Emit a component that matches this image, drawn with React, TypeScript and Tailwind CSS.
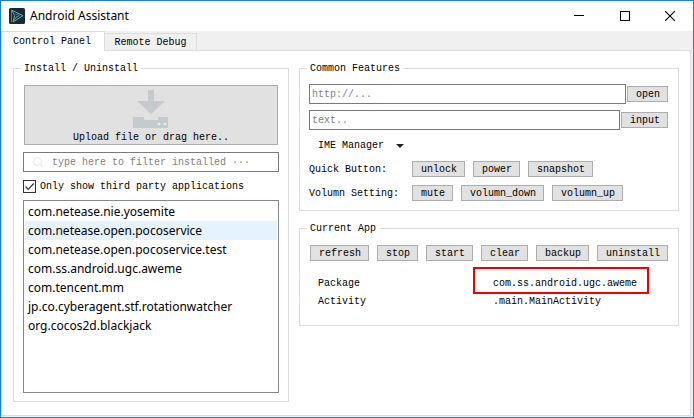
import type { ButtonHTMLAttributes, ReactNode } from "react";

const PACKAGES = [
  "com.netease.nie.yosemite",
  "com.netease.open.pocoservice",
  "com.netease.open.pocoservice.test",
  "com.ss.android.ugc.aweme",
  "com.tencent.mm",
  "jp.co.cyberagent.stf.rotationwatcher",
  "org.cocos2d.blackjack",
];

function PushButton({ children, ...rest }: ButtonHTMLAttributes<HTMLButtonElement>) {
  return (
    <button
      type="button"
      className="h-4 shrink-0 border border-[#adadad] bg-[#e1e1e1] pt-0.5 pr-[7px] pl-2 leading-3 hover:bg-[#e5f1fb]"
      {...rest}
    >
      {children}
    </button>
  );
}

function GroupBox({ title, className, children }: { title: string; className: string; children: ReactNode }) {
  return (
    <fieldset className={`min-w-0 border border-[#dcdcdc] ${className}`}>
      <legend className="h-3 px-[3px] pt-px leading-3">{title}</legend>
      {children}
    </fieldset>
  );
}

function AppLogo() {
  return (
    <svg width="16" height="16" viewBox="0 0 16 16" aria-hidden="true">
      <rect width="16" height="16" rx="1.5" fill="#1c2836" />
      <path d="M2.5 2 14 7.7 4 14 5.6 7.5Z" fill="none" stroke="#5fb5ae" strokeWidth="1" />
      <path d="M2.5 2v12M5.5 10.8l5-3.2-4.3-1.7M4 14l4-6" fill="none" stroke="#4c928f" strokeWidth="0.9" />
    </svg>
  );
}

function UploadIcon() {
  return (
    <svg width="36" height="39" viewBox="0 0 36 39" aria-hidden="true">
      <path d="M15 0h6v11h11L18 24 4 11h11Z" fill="#c5cacd" />
      <path d="M0 27h11v3h14v-3h10v11H0Z" fill="#c5cacd" />
      <circle cx="26" cy="34" r="1.6" fill="#e6e8e9" />
      <circle cx="32" cy="34" r="1.6" fill="#e6e8e9" />
    </svg>
  );
}

function TitleBar() {
  return (
    <header className="flex h-[30px] shrink-0 items-center pl-2">
      <AppLogo />
      <h1 className="ml-[5px] flex-1 font-['Noto_Sans',sans-serif] text-[12px]">Android Assistant</h1>
      <button type="button" aria-label="Minimize" className="flex h-full w-[45px] items-center justify-center">
        <svg width="11" height="11" viewBox="0 0 11 11" shapeRendering="crispEdges">
          <path d="M0 4.5h10" stroke="#000" />
        </svg>
      </button>
      <button type="button" aria-label="Maximize" className="flex h-full w-[45px] items-center justify-center">
        <svg width="10" height="10" viewBox="0 0 10 10" shapeRendering="crispEdges">
          <rect x="0.5" y="0.5" width="9" height="9" fill="none" stroke="#000" />
        </svg>
      </button>
      <button type="button" aria-label="Close" className="flex h-full w-[46px] items-center justify-center">
        <svg width="10" height="10" viewBox="0 0 10 10">
          <path d="M0 0l10 10M10 0L0 10" stroke="#000" strokeWidth="1.1" />
        </svg>
      </button>
    </header>
  );
}

function InstallPanel() {
  return (
    <GroupBox title="Install / Uninstall" className="flex flex-col px-[9px] pb-2 [&>legend]:ml-[-2px]">
      <button
        type="button"
        className="mx-px mt-[11px] flex h-[60px] shrink-0 flex-col items-center border border-[#adadad] bg-[#e1e1e1] pt-1"
      >
        <UploadIcon />
        <span className="mt-[3px] leading-3">Upload file or drag here..</span>
      </button>
      <div className="mt-[7px] flex h-5 shrink-0 items-center border border-[#7a7a7a] pl-[9px]">
        <svg width="10" height="10" viewBox="0 0 10 10" fill="none" stroke="#e9e9e9" aria-hidden="true">
          <circle cx="4.5" cy="4.5" r="4" />
          <path d="M7 7l2.5 2.5" strokeWidth="1.5" />
        </svg>
        <input
          type="text"
          aria-label="Filter installed packages"
          placeholder="type here to filter installed ···"
          className="ml-[9px] min-w-0 flex-1 pt-px leading-3 outline-none placeholder:text-[#808080]"
        />
      </div>
      <label className="mt-[5px] flex items-center gap-1">
        <span className="relative flex">
          <input
            type="checkbox"
            defaultChecked
            className="peer size-[13px] appearance-none border border-[#333] bg-white"
          />
          <svg
            width="13"
            height="13"
            viewBox="0 0 13 13"
            className="pointer-events-none absolute inset-0 hidden peer-checked:block"
            aria-hidden="true"
          >
            <path d="M2.5 6.5l2.7 2.8L10.7 3.5" fill="none" stroke="#333" strokeWidth="1.2" />
          </svg>
        </span>
        <span className="pt-0.5">Only show third party applications</span>
      </label>
      <ul
        role="listbox"
        aria-label="Installed packages"
        className="mt-[5px] flex-1 border border-[#828790] p-px font-['Noto_Sans',sans-serif] text-[12px] leading-[19px]"
      >
        {PACKAGES.map((name, i) => (
          <li
            key={name}
            role="option"
            aria-selected={i === 1}
            className="pl-[3px] aria-selected:bg-[#e5f3ff]"
          >
            {name}
          </li>
        ))}
      </ul>
    </GroupBox>
  );
}

function CommonFeatures() {
  return (
    <GroupBox title="Common Features" className="pr-[10px] pb-[9px] pl-[9px] [&>legend]:ml-[-2px]">
      <div className="mt-[10px] flex items-center gap-px">
        <input
          type="text"
          aria-label="URL"
          placeholder="http://..."
          className="h-5 min-w-0 flex-1 border border-[#7a7a7a] px-0.5 pt-px leading-3 outline-none placeholder:text-[#808080]"
        />
        <PushButton>open</PushButton>
      </div>
      <div className="mt-[6px] flex items-center gap-px">
        <input
          type="text"
          aria-label="Text"
          placeholder="text.."
          className="h-5 min-w-0 flex-1 border border-[#7a7a7a] px-0.5 pt-px leading-3 outline-none placeholder:text-[#808080]"
        />
        <PushButton>input</PushButton>
      </div>
      <div className="relative mt-2 ml-[9px] flex h-4 w-[86px] items-center">
        <select aria-label="IME Manager" className="h-4 w-full appearance-none bg-transparent leading-4 outline-none">
          <option>IME Manager</option>
        </select>
        <svg
          width="8"
          height="4"
          viewBox="0 0 8 4"
          className="pointer-events-none absolute right-0 fill-[#222]"
          aria-hidden="true"
        >
          <path d="M0 0h8L4 4Z" />
        </svg>
      </div>
      <div className="mt-[7px] flex items-center gap-2">
        <span className="h-4 w-[95px] pt-px">Quick Button:</span>
        <PushButton>unlock</PushButton>
        <PushButton>power</PushButton>
        <PushButton>snapshot</PushButton>
      </div>
      <div className="mt-2 flex items-center gap-2">
        <span className="h-4 w-[95px] pt-px">Volumn Setting:</span>
        <PushButton>mute</PushButton>
        <PushButton>volumn_down</PushButton>
        <PushButton>volumn_up</PushButton>
      </div>
    </GroupBox>
  );
}

function CurrentApp() {
  return (
    <GroupBox title="Current App" className="pr-[10px] pb-[14px] pl-[10px] [&>legend]:ml-[-3px]">
      <div className="mt-[11px] flex justify-between">
        <PushButton>refresh</PushButton>
        <PushButton>stop</PushButton>
        <PushButton>start</PushButton>
        <PushButton>clear</PushButton>
        <PushButton>backup</PushButton>
        <PushButton>uninstall</PushButton>
      </div>
      <dl className="mt-[14px] ml-2 grid grid-cols-2 leading-[18px]">
        <dt>Package</dt>
        <dd className="relative">
          <span className="absolute -top-2 -left-[20px] h-[27px] w-[176px] border-2 border-[#f00000]" />
          com.ss.android.ugc.aweme
        </dd>
        <dt>Activity</dt>
        <dd>.main.MainActivity</dd>
      </dl>
    </GroupBox>
  );
}

export default function App() {
  return (
    <div className="flex min-h-screen flex-col border border-[#1a80d2] bg-white font-['Liberation_Mono',monospace] text-[10px] leading-4 text-black">
      <TitleBar />
      <div className="flex flex-1 flex-col bg-[#f0f0f0] pr-0.5 pb-px">
        <div role="tablist" className="flex h-5 shrink-0 items-end">
          <button
            type="button"
            role="tab"
            aria-selected="true"
            className="z-10 h-5 w-[104px] border border-b-0 border-[#dcdcdc] bg-white pr-[2px] leading-[18px]"
          >
            Control Panel
          </button>
          <button
            type="button"
            role="tab"
            aria-selected="false"
            className="h-[18px] w-[92px] border border-l-0 border-[#dcdcdc] pt-px leading-4"
          >
            Remote Debug
          </button>
        </div>
        <main
          role="tabpanel"
          className="-mt-px flex flex-1 flex-col border border-[#dcdcdc] bg-white px-[11px] pt-[11px] pb-[13px]"
        >
          <div className="grid flex-1 grid-cols-[276fr_380fr] gap-[10px]">
            <InstallPanel />
            <div className="flex min-w-0 flex-col gap-[11px]">
              <CommonFeatures />
              <CurrentApp />
            </div>
          </div>
        </main>
      </div>
    </div>
  );
}
